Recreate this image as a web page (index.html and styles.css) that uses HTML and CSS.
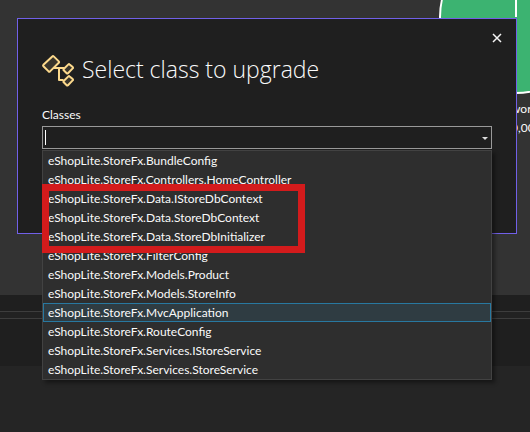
FILE: index.html
```html
<!DOCTYPE html>
<html lang="en">
<head>
<meta charset="utf-8">
<title>Select class to upgrade</title>
<link rel="stylesheet" href="styles.css">
</head>
<body>
<main class="workspace">
  <section class="report">
    <figure class="chart">
      <svg class="chart-pie" viewBox="0 0 154 154" aria-hidden="true">
        <circle cx="77" cy="77" r="76" fill="#3cb371" stroke="#fff" stroke-width="2"/>
        <path d="M77 77V1" stroke="#fff" stroke-width="2"/>
      </svg>
      <figcaption class="chart-caption"><span>wor</span><span>0,00</span></figcaption>
    </figure>
  </section>
  <div class="panel-head"></div>
  <div class="panel-split"></div>
  <div class="panel-body"></div>
</main>

<div class="overlay">
  <section class="dialog" role="dialog" aria-labelledby="dialog-title">
    <button class="close" type="button" aria-label="Close">
      <svg width="10" height="10" viewBox="0 0 10 10"><path d="M1 1l8 8M9 1L1 9" stroke="#f5f5f5" stroke-width="1.5"/></svg>
    </button>
    <header class="dialog-header">
      <svg class="class-icon" width="32" height="32" viewBox="0 0 32 32" fill="none" stroke="#fcd98c" stroke-width="2" stroke-linejoin="round" aria-hidden="true">
        <path d="M11.5 13H22M17 13V25H21.5"/>
        <g fill="#38342b">
          <path d="M10.3 1.4Q11 .8 11.7 1.4L16.8 6.4Q17.5 7.1 16.8 7.8L8 16.4Q7.3 17 6.6 16.4L1.4 11.2Q.8 10.5 1.4 9.8Z"/>
          <path d="M26.4 9.4Q27 8.8 27.6 9.4L30.7 12.1Q31.3 12.8 30.7 13.4L26 18.2Q25.3 18.8 24.7 18.2L21.7 15.3Q21.2 14.7 21.7 14Z"/>
          <path d="M26.4 21.4Q27 20.8 27.6 21.4L30.7 24.1Q31.3 24.8 30.7 25.4L26 30.2Q25.3 30.8 24.7 30.2L21.7 27.3Q21.2 26.7 21.7 26Z"/>
        </g>
      </svg>
      <h1 class="dialog-title" id="dialog-title">Select class to upgrade</h1>
    </header>
    <label class="field-label" for="classes">Classes</label>
    <div class="combo">
      <input class="combo-input" id="classes" type="text" role="combobox" aria-expanded="true" aria-controls="class-list" autocomplete="off">
      <span class="caret"></span>
      <span class="combo-arrow"></span>
      <div class="popup">
        <ul class="options" id="class-list" role="listbox">
          <li class="option" role="option">eShopLite.StoreFx.BundleConfig</li>
          <li class="option" role="option">eShopLite.StoreFx.Controllers.HomeController</li>
          <li class="option" role="option">eShopLite.StoreFx.Data.IStoreDbContext</li>
          <li class="option" role="option">eShopLite.StoreFx.Data.StoreDbContext</li>
          <li class="option" role="option">eShopLite.StoreFx.Data.StoreDbInitializer</li>
          <li class="option" role="option">eShopLite.StoreFx.FilterConfig</li>
          <li class="option" role="option">eShopLite.StoreFx.Models.Product</li>
          <li class="option" role="option">eShopLite.StoreFx.Models.StoreInfo</li>
          <li class="option option-active" role="option" aria-selected="true">eShopLite.StoreFx.MvcApplication</li>
          <li class="option" role="option">eShopLite.StoreFx.RouteConfig</li>
          <li class="option" role="option">eShopLite.StoreFx.Services.IStoreService</li>
          <li class="option" role="option">eShopLite.StoreFx.Services.StoreService</li>
        </ul>
        <div class="highlight"></div>
      </div>
    </div>
  </section>
</div>
</body>
</html>
```
FILE: styles.css
```css
* {
  box-sizing: border-box;
}

body {
  margin: 0;
  background: #252525;
  color: #fafafa;
  font: 12px/19px Lato, "Open Sans", sans-serif;
  overflow: hidden;
}

.workspace {
  display: flex;
  flex-direction: column;
  min-height: 100vh;
}

.report {
  position: relative;
  height: 295px;
  background: #333;
  overflow: hidden;
}

.chart {
  position: absolute;
  top: -60px;
  right: -63px;
  width: 154px;
  margin: 0;
}

.chart-pie {
  display: block;
  width: 154px;
}

.chart-caption {
  display: flex;
  flex-direction: column;
  padding: 5px 0 0 72px;
}

.panel-head {
  height: 17px;
  background: #1f1f1f;
  border-bottom: 1px solid #3d3d3d;
}

.panel-split {
  height: 7px;
  background: #222;
  border-bottom: 1px solid #3d3d3d;
}

.panel-body {
  height: 47px;
  background: #1f1f1f;
}

.overlay {
  position: absolute;
  inset: 0;
  padding: 18px 13px 0 17px;
}

.dialog {
  position: relative;
  padding: 32px 24px 84px;
  background: #1f1f1f;
  border: 1px solid #7160e8;
}

.close {
  position: absolute;
  top: 14px;
  right: 14px;
  display: flex;
  padding: 0;
  border: 0;
  background: none;
}

.dialog-header {
  display: flex;
  align-items: center;
  gap: 8px;
}

.class-icon {
  flex: none;
  margin-top: 4px;
}

.dialog-title {
  margin: 0;
  font: 300 23px/36px "Open Sans", "Noto Sans", sans-serif;
}

.field-label {
  display: block;
  margin-top: 18px;
  line-height: 20px;
}

.combo {
  position: relative;
  margin-top: 1px;
}

.combo-input {
  display: block;
  width: 100%;
  height: 23px;
  padding: 0 20px 0 4px;
  background: #1f1f1f;
  border: 1px solid #999;
  border-radius: 0;
  outline: 0;
  color: inherit;
  font: inherit;
}

.caret {
  position: absolute;
  top: 4px;
  left: 3px;
  width: 1px;
  height: 15px;
  background: #fff;
}

.combo-arrow {
  position: absolute;
  top: 11px;
  right: 4px;
  border: 3px solid transparent;
  border-top-color: #ddd;
  border-bottom: 0;
}

.popup {
  position: absolute;
  top: 24px;
  left: 0;
  right: 0;
  background: #2e2e2e;
  border: 1px solid #424242;
  box-shadow: 3px 3px 4px rgba(0, 0, 0, 0.4);
}

.options {
  margin: 0;
  padding: 0;
  list-style: none;
}

.option {
  height: 19px;
  padding: 0 4px;
  border: 1px solid transparent;
  line-height: 18px;
  white-space: nowrap;
}

.option-active {
  background: #2f3c42;
  border-color: #2878a0;
}

.highlight {
  position: absolute;
  top: 33px;
  left: -1px;
  width: 263px;
  height: 69px;
  border: 7px solid #d31b1c;
}
```
